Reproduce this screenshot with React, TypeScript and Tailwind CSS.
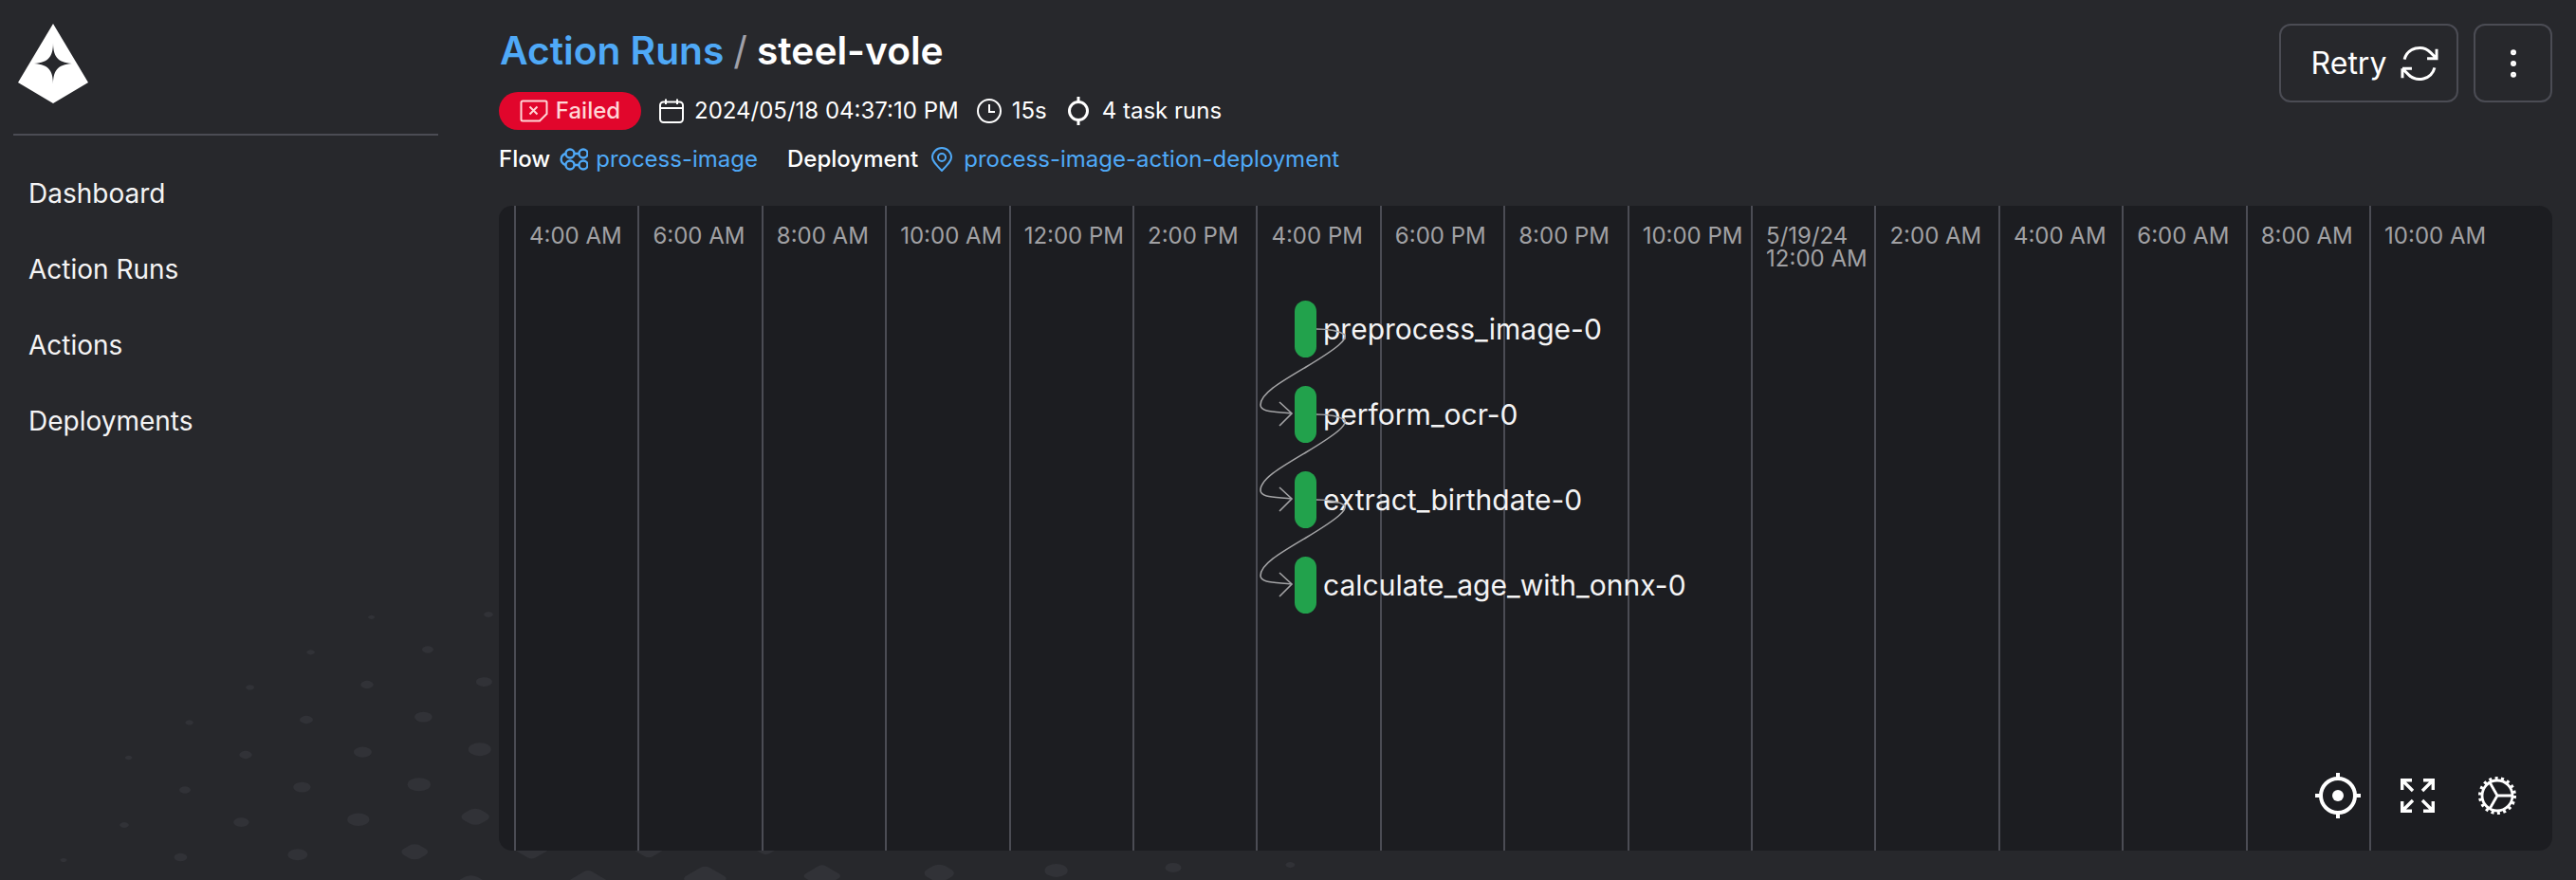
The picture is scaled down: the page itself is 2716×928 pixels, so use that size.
import { MoreVertical } from 'lucide-react';

const hours = [
  '4:00 AM', '6:00 AM', '8:00 AM', '10:00 AM', '12:00 PM', '2:00 PM', '4:00 PM', '6:00 PM', '8:00 PM', '10:00 PM',
  '5/19/24\n12:00 AM', '2:00 AM', '4:00 AM', '6:00 AM', '8:00 AM', '10:00 AM',
];

const tasks = ['preprocess_image-0', 'perform_ocr-0', 'extract_birthdate-0', 'calculate_age_with_onnx-0'];

const navItems = ['Dashboard', 'Action Runs', 'Actions', 'Deployments'];

// dotted backdrop: a skewed grid whose cells grow toward the bottom, around x=740
const dots: { x: number; y: number; w: number }[] = [];
for (let i = -3; i < 15; i++) {
  for (let j = -1; j < 9; j++) {
    const x = 67 + i * 123.4 + j * 64;
    const y = 907 - i * 2.9 - j * 37;
    const d = Math.hypot(x - 740, (y - 940) * 2);
    const w = 46 - d * 0.058;
    if (w >= 6) dots.push({ x, y, w });
  }
}

const Logo = () => (
  <svg width="76" height="86" viewBox="0 0 76 86" className="block">
    <path
      fillRule="evenodd"
      fill="#fff"
      d="M37 0 L74 62 L37 84 L0 62 Z M37 20 C37 36 31 42 14 42 C31 42 37 48 37 64 C37 48 43 42 60 42 C43 42 37 36 37 20 Z"
    />
  </svg>
);

const Edge = ({ top }: { top: number }) => (
  <svg width="110" height="115" viewBox="0 0 110 115" className="absolute left-[794px]" style={{ top }} fill="none">
    <path
      d="M68 7 C80 7 92 9 98 13 C100 18 92 26 57 47 C30 63 9 75 9 87 C9 95 25 94 42 96"
      stroke="#a3a3a5"
      strokeWidth="1.6"
    />
    <path d="M29 84 L42 96 L29 109" stroke="#a3a3a5" strokeWidth="1.6" />
  </svg>
);

export default function App() {
  return (
    <div className="relative w-[2716px] h-[928px] overflow-hidden bg-[#27282c] text-white font-['Inter',sans-serif]">
      <svg width="2716" height="928" className="absolute inset-0">
        {dots.map((d, i) => {
          // small dots are plain ellipses, the big ones turn into rounded diamonds
          const f = d.w < 26 ? 0.5 : d.w < 33 ? 0.34 : 0.2;
          const s = d.w / (1.414 - 0.828 * f);
          return (
            <rect
              key={i}
              x={-s / 2}
              y={-s / 2}
              width={s}
              height={s}
              rx={s * f}
              transform={`translate(${d.x} ${d.y}) scale(1 0.58) rotate(45)`}
              fill="#313237"
            />
          );
        })}
      </svg>

      <div className="relative flex h-full">
        <aside className="w-[476px] shrink-0 pl-[14px]">
          <div className="h-[141px] pl-[5px] pt-[25px]">
            <Logo />
          </div>
          <div className="w-[448px] h-[2px] bg-[#4b4c54]" />
          <nav className="flex flex-col pt-[21px] pl-[16px]">
            {navItems.map((n) => (
              <a key={n} className="h-[80px] flex items-center text-[28px] text-[#f4f4f5]">
                {n}
              </a>
            ))}
          </nav>
        </aside>

        <main className="flex-1 min-w-0 pl-[50px] pr-[25px] flex flex-col">
          <div className="flex justify-between items-start pt-[25px]">
            <div>
              <div className="flex items-center h-[58px] pl-[1px] text-[40.7px] font-semibold leading-none">
                <span className="text-[#4fa9f7]">Action Runs</span>
                <span className="mx-[10px] text-[#a1a1aa] font-normal">/</span>
                <span>steel-vole</span>
              </div>
              <div className="flex items-center mt-[14px] h-[40px] text-[24px]">
                <span className="flex items-center gap-[8px] h-[40px] w-[150px] justify-center rounded-full bg-[#e1062c] font-medium text-[#ffd6d6]">
                  <svg width="30" height="24" viewBox="0 0 30 24" fill="none" stroke="#ffd6d6" strokeWidth="2">
                    <path d="M1.5 3 a1.5 1.5 0 0 1 1.5-1.5 H27 a1.5 1.5 0 0 1 1.5 1.5 V15 L21 22.5 H3 a1.5 1.5 0 0 1-1.5-1.5 Z" />
                    <path d="M10.5 7.5 L18.5 15.5 M18.5 7.5 L10.5 15.5" />
                  </svg>
                  Failed
                </span>
                <svg className="ml-[19px]" width="26" height="26" viewBox="0 0 26 26" fill="none" stroke="#fff" strokeWidth="2">
                  <rect x="1" y="3.5" width="24" height="21.5" rx="3.5" />
                  <path d="M1 10 H25 M7 0.5 V6 M19 0.5 V6" />
                </svg>
                <span className="ml-[11px]">2024/05/18 04:37:10 PM</span>
                <svg className="ml-[19px]" width="26" height="26" viewBox="0 0 26 26" fill="none" stroke="#fff" strokeWidth="2">
                  <circle cx="13" cy="13" r="12" />
                  <path d="M13 6 V14 H19" />
                </svg>
                <span className="ml-[11px]">15s</span>
                <svg className="ml-[22px]" width="22" height="30" viewBox="0 0 22 30" fill="none" stroke="#fff" strokeWidth="3">
                  <circle cx="11" cy="15" r="9.5" />
                  <path d="M11 0 V5 M11 25 V30" />
                </svg>
                <span className="ml-[14px]">4 task runs</span>
              </div>
              <div className="flex items-center mt-[13px] h-[36px] text-[24px]">
                <span className="font-medium">Flow</span>
                <svg className="ml-[10px]" width="30" height="24" viewBox="0 0 30 24" fill="none" stroke="#4fa9f7" strokeWidth="2.4">
                  <circle cx="11" cy="6" r="4.5" />
                  <circle cx="25" cy="6" r="4.5" />
                  <circle cx="11" cy="18" r="4.5" />
                  <circle cx="25" cy="18" r="4.5" />
                  <path d="M15.5 6 H20.5 M15.5 18 H20.5 M6.5 6 C0 8 0 16 6.5 18" />
                </svg>
                <a className="ml-[8px] text-[#4fa9f7]">process-image</a>
                <span className="ml-[31px] font-medium">Deployment</span>
                <svg className="ml-[14px]" width="22" height="26" viewBox="0 0 22 26" fill="none" stroke="#4fa9f7" strokeWidth="2">
                  <path d="M11 25 C5 19 1 15 1 11 a10 10 0 0 1 20 0 C21 15 17 19 11 25 Z" />
                  <circle cx="11" cy="11" r="4" />
                </svg>
                <a className="ml-[12px] text-[#4fa9f7]">process-image-action-deployment</a>
              </div>
            </div>
            <div className="flex gap-[16px]">
              <button className="w-[189px] h-[83px] rounded-[12px] border-2 border-[#4b4c54] flex items-center justify-center gap-[11px] text-[32px] pl-[17px]">
                Retry
                <svg width="48" height="48" viewBox="0 0 24 24" fill="none" stroke="#fff" strokeWidth="1.5">
                  <path d="M16.023 9.348h4.992v-.001M2.985 19.644v-4.992m0 0h4.992m-4.993 0l3.181 3.183a8.25 8.25 0 0013.803-3.7M4.031 9.865a8.25 8.25 0 0113.803-3.7l3.181 3.182m0-4.991v4.99" />
                </svg>
              </button>
              <button className="w-[83px] h-[83px] rounded-[12px] border-2 border-[#4b4c54] flex items-center justify-center">
                <MoreVertical size={40} strokeWidth={1.6} />
              </button>
            </div>
          </div>

          <section className="relative mt-[31px] h-[680px] rounded-[14px] overflow-hidden bg-[#1c1d21]">
            <div className="flex h-full pl-[16px]">
              {hours.map((h, i) => (
                <div key={i} className="w-[130.42px] shrink-0 h-full border-l-2 border-[#4b4c54] pl-[14px] pt-[20px]">
                  <div className="whitespace-pre text-[24px] leading-[24px] text-[#a1a1a4]">{h}</div>
                </div>
              ))}
            </div>

            {tasks.map((t, i) => (
              <div key={t} className="absolute left-[839px] flex items-center h-[60px]" style={{ top: 100 + i * 90 }}>
                <div className="w-[23px] h-[60px] rounded-[12px] bg-[#22a24c]" />
                <span className="ml-[7px] text-[30px] text-[#f4f4f5] whitespace-nowrap">{t}</span>
              </div>
            ))}
            {[0, 1, 2].map((i) => (
              <Edge key={i} top={123 + i * 90} />
            ))}

            <div className="absolute right-[38px] bottom-[34px] flex items-center">
              <svg width="48" height="48" viewBox="0 0 48 48" fill="none" stroke="#fff" strokeWidth="4">
                <circle cx="24" cy="24" r="18" />
                <circle cx="24" cy="24" r="6" fill="#fff" stroke="none" />
                <path d="M24 0 V6 M24 42 V48 M0 24 H6 M42 24 H48" />
              </svg>
              <svg className="ml-[42px]" width="36" height="36" viewBox="0 0 36 36" fill="none" stroke="#fff" strokeWidth="3.4">
                <path d="M1.7 12 V1.7 H12 M2 2 L13 13 M34.3 12 V1.7 H24 M34 2 L23 13 M1.7 24 V34.3 H12 M2 34 L13 23 M34.3 24 V34.3 H24 M34 34 L23 23" />
              </svg>
              <svg className="ml-[46px]" width="40" height="40" viewBox="0 0 40 40" fill="none" stroke="#fff" strokeWidth="2.8">
                <circle cx="20" cy="20" r="16" />
                <circle cx="20" cy="20" r="18" strokeWidth="4" strokeDasharray="3 3.3" />
                <path d="M20 20 H36 M20 20 L12 6 M20 20 L12 34" />
              </svg>
            </div>
          </section>
        </main>
      </div>
    </div>
  );
}
